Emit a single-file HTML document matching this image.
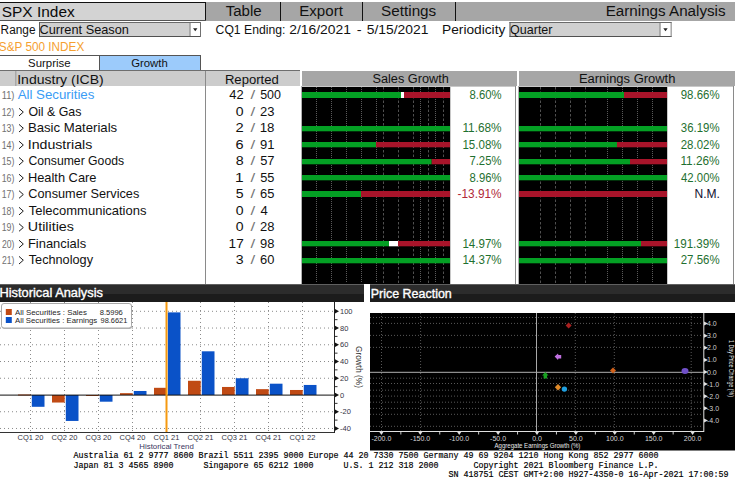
<!DOCTYPE html>
<html><head><meta charset="utf-8"><style>
html,body{margin:0;padding:0;background:#fff;width:735px;height:486px;overflow:hidden}
svg{display:block}
</style></head><body>
<svg width="735" height="486" viewBox="0 0 735 486" style='font-family:"Liberation Sans", sans-serif'>
<rect x="0" y="2" width="206" height="19" fill="#d3d3d3" />
<rect x="0" y="2" width="206" height="1" fill="#111" />
<rect x="205" y="2" width="1" height="19" fill="#111" />
<rect x="0" y="20" width="206" height="1" fill="#555" />
<text x="1.81" y="17" font-size="15" fill="#0a0a0a" textLength="72.89" lengthAdjust="spacingAndGlyphs" >SPX Index</text>
<rect x="206" y="2" width="529" height="19" fill="#a6a6a6" />
<rect x="280" y="2" width="1" height="19" fill="#111" />
<rect x="362" y="2" width="1" height="19" fill="#111" />
<rect x="455" y="2" width="1" height="19" fill="#111" />
<text x="225.66" y="16.3" font-size="15.5" fill="#111" textLength="35.99" lengthAdjust="spacingAndGlyphs" >Table</text>
<text x="299.25" y="16.3" font-size="15.5" fill="#111" textLength="43.66" lengthAdjust="spacingAndGlyphs" >Export</text>
<text x="381.11" y="16.3" font-size="15.5" fill="#111" textLength="55.13" lengthAdjust="spacingAndGlyphs" >Settings</text>
<text x="605.75" y="16.3" font-size="15.5" fill="#111" textLength="119.80" lengthAdjust="spacingAndGlyphs" >Earnings Analysis</text>
<text x="0.62" y="33.5" font-size="12.5" fill="#111" textLength="34.90" lengthAdjust="spacingAndGlyphs" >Range</text>
<rect x="39" y="22" width="162" height="15" fill="#d0d0d0" />
<rect x="39" y="22" width="162" height="1" fill="#6a6a6a" />
<rect x="39" y="22" width="1" height="15" fill="#5a5a5a" />
<rect x="39" y="36" width="162" height="1" fill="#505050" />
<rect x="200" y="22" width="1" height="15" fill="#707070" />
<rect x="189.5" y="23" width="10.5" height="13" fill="#ffffff" />
<rect x="189.5" y="23" width="1" height="13" fill="#6a6a6a" />
<path d="M193.05,28.3 L197.45,28.3 L195.25,31.2 Z" fill="#222"/>
<text x="39.56" y="34.1" font-size="12.8" fill="#111" textLength="89.36" lengthAdjust="spacingAndGlyphs" >Current Season</text>
<text x="215.59" y="33.9" font-size="13" fill="#111" textLength="69.82" lengthAdjust="spacingAndGlyphs" >CQ1 Ending:</text>
<text x="289.31" y="33.9" font-size="13" fill="#111" textLength="61.57" lengthAdjust="spacingAndGlyphs" >2/16/2021</text>
<text x="356.74" y="33.9" font-size="13" fill="#111" textLength="4.89" lengthAdjust="spacingAndGlyphs" >-</text>
<text x="366.74" y="33.9" font-size="13" fill="#111" textLength="61.73" lengthAdjust="spacingAndGlyphs" >5/15/2021</text>
<text x="442.07" y="33.9" font-size="13" fill="#111" textLength="63.27" lengthAdjust="spacingAndGlyphs" >Periodicity</text>
<rect x="509.5" y="22" width="162.0" height="15" fill="#d0d0d0" />
<rect x="509.5" y="22" width="162.0" height="1" fill="#6a6a6a" />
<rect x="509.5" y="22" width="1" height="15" fill="#5a5a5a" />
<rect x="509.5" y="36" width="162.0" height="1" fill="#505050" />
<rect x="670.5" y="22" width="1" height="15" fill="#707070" />
<rect x="659.5" y="23" width="11.0" height="13" fill="#ffffff" />
<rect x="659.5" y="23" width="1" height="13" fill="#6a6a6a" />
<path d="M663.3,28.3 L667.7,28.3 L665.5,31.2 Z" fill="#222"/>
<text x="510.11" y="34.1" font-size="12.8" fill="#111" textLength="42.38" lengthAdjust="spacingAndGlyphs" >Quarter</text>
<text x="-1.13" y="51" font-size="12" fill="#f5a030" textLength="85.37" lengthAdjust="spacingAndGlyphs" >S&amp;P 500 INDEX</text>
<rect x="0" y="55" width="200" height="15" fill="#ffffff" />
<rect x="99" y="55" width="101" height="15" fill="#9ccbfb" />
<rect x="0" y="55" width="201" height="1" fill="#555" />
<rect x="99" y="55" width="1" height="15" fill="#555" />
<rect x="200" y="55" width="1" height="15" fill="#555" />
<rect x="0" y="70" width="300" height="1" fill="#6e6e6e" />
<rect x="299" y="71" width="1" height="15" fill="#e0e0e0" />
<text x="28.09" y="66.5" font-size="10.5" fill="#111" textLength="42.41" lengthAdjust="spacingAndGlyphs" >Surprise</text>
<text x="131.23" y="66.5" font-size="10.5" fill="#111" textLength="36.48" lengthAdjust="spacingAndGlyphs" >Growth</text>
<rect x="0" y="71" width="300" height="15" fill="#cccccc" />
<rect x="15" y="71" width="1.5" height="15" fill="#a8a8a8" />
<rect x="302" y="71" width="215" height="15" fill="#a6a6a6" />
<rect x="519" y="71" width="216" height="15" fill="#a6a6a6" />
<text x="17.20" y="83.5" font-size="12.5" fill="#111" textLength="86.55" lengthAdjust="spacingAndGlyphs" >Industry (ICB)</text>
<text x="224.92" y="83.5" font-size="12.5" fill="#111" textLength="53.92" lengthAdjust="spacingAndGlyphs" >Reported</text>
<text x="372.43" y="82.5" font-size="12.5" fill="#111" textLength="76.37" lengthAdjust="spacingAndGlyphs" >Sales Growth</text>
<text x="578.93" y="82.5" font-size="12.5" fill="#111" textLength="96.48" lengthAdjust="spacingAndGlyphs" >Earnings Growth</text>
<rect x="205" y="71" width="1" height="213" fill="#8a8a8a" />
<rect x="301" y="86" width="1" height="198" fill="#b0b0b0" />
<rect x="302" y="86" width="148" height="198" fill="#000" />
<rect x="302" y="86" width="148" height="1" fill="#c8c8c8" />
<rect x="450" y="86" width="1" height="198" fill="#c8c8c8" />
<rect x="450" y="86" width="66" height="1" fill="#c8c8c8" />
<rect x="515" y="86" width="1" height="198" fill="#8a8a8a" />
<rect x="518" y="86" width="1" height="198" fill="#b0b0b0" />
<rect x="519" y="86" width="148" height="198" fill="#000" />
<rect x="519" y="86" width="148" height="1" fill="#c8c8c8" />
<rect x="667" y="86" width="1" height="198" fill="#c8c8c8" />
<rect x="667" y="86" width="67" height="1" fill="#c8c8c8" />
<rect x="733" y="86" width="1" height="198" fill="#8a8a8a" />
<line x1="316.5" y1="87" x2="316.5" y2="283" stroke="#5a5a5a" stroke-width="1" stroke-dasharray="1,1" />
<line x1="331.5" y1="87" x2="331.5" y2="283" stroke="#5a5a5a" stroke-width="1" stroke-dasharray="1,1" />
<line x1="346.5" y1="87" x2="346.5" y2="283" stroke="#5a5a5a" stroke-width="1" stroke-dasharray="1,1" />
<line x1="361.5" y1="87" x2="361.5" y2="283" stroke="#5a5a5a" stroke-width="1" stroke-dasharray="1,1" />
<line x1="376.5" y1="87" x2="376.5" y2="283" stroke="#5a5a5a" stroke-width="1" stroke-dasharray="1,1" />
<line x1="420.5" y1="87" x2="420.5" y2="283" stroke="#5a5a5a" stroke-width="1" stroke-dasharray="1,1" />
<line x1="435.5" y1="87" x2="435.5" y2="283" stroke="#5a5a5a" stroke-width="1" stroke-dasharray="1,1" />
<line x1="607.5" y1="87" x2="607.5" y2="283" stroke="#5a5a5a" stroke-width="1" stroke-dasharray="1,1" />
<line x1="622.5" y1="87" x2="622.5" y2="283" stroke="#5a5a5a" stroke-width="1" stroke-dasharray="1,1" />
<line x1="637.5" y1="87" x2="637.5" y2="283" stroke="#5a5a5a" stroke-width="1" stroke-dasharray="1,1" />
<line x1="652.5" y1="87" x2="652.5" y2="283" stroke="#5a5a5a" stroke-width="1" stroke-dasharray="1,1" />
<line x1="383.5" y1="87" x2="383.5" y2="283" stroke="#505050" stroke-width="1" stroke-dasharray="2.5,2" />
<line x1="398.5" y1="87" x2="398.5" y2="283" stroke="#505050" stroke-width="1" stroke-dasharray="2.5,2" />
<line x1="413.5" y1="87" x2="413.5" y2="283" stroke="#505050" stroke-width="1" stroke-dasharray="2.5,2" />
<line x1="428.5" y1="87" x2="428.5" y2="283" stroke="#505050" stroke-width="1" stroke-dasharray="2.5,2" />
<line x1="443.5" y1="87" x2="443.5" y2="283" stroke="#505050" stroke-width="1" stroke-dasharray="2.5,2" />
<line x1="540.5" y1="87" x2="540.5" y2="283" stroke="#505050" stroke-width="1" stroke-dasharray="2.5,2" />
<line x1="555.5" y1="87" x2="555.5" y2="283" stroke="#505050" stroke-width="1" stroke-dasharray="2.5,2" />
<line x1="570.5" y1="87" x2="570.5" y2="283" stroke="#505050" stroke-width="1" stroke-dasharray="2.5,2" />
<line x1="585.5" y1="87" x2="585.5" y2="283" stroke="#505050" stroke-width="1" stroke-dasharray="2.5,2" />
<text x="1.70" y="99.1" font-size="11" fill="#707070" textLength="12.77" lengthAdjust="spacingAndGlyphs" >11)</text>
<text x="17.67" y="99.1" font-size="12.8" fill="#3a9cf5" textLength="76.70" lengthAdjust="spacingAndGlyphs" >All Securities</text>
<text x="229.31" y="99.1" font-size="12.5" fill="#111" textLength="14.37" lengthAdjust="spacingAndGlyphs" >42</text>
<text x="250.40" y="99.1" font-size="12.5" fill="#777" textLength="4.71" lengthAdjust="spacingAndGlyphs" >/</text>
<text x="260.20" y="99.1" font-size="12.5" fill="#111" textLength="20.78" lengthAdjust="spacingAndGlyphs" >500</text>
<rect x="302" y="92" width="99" height="6" fill="#04a024" />
<rect x="401" y="92" width="3" height="6" fill="#ffffff" />
<rect x="404" y="92" width="46" height="6" fill="#a8142a" />
<text x="469.52" y="99.1" font-size="12.8" fill="#1f7030" textLength="32.05" lengthAdjust="spacingAndGlyphs" >8.60%</text>
<rect x="519" y="92" width="105" height="6" fill="#04a024" />
<rect x="624" y="92" width="43" height="6" fill="#a8142a" />
<text x="680.76" y="99.1" font-size="12.8" fill="#1f7030" textLength="38.84" lengthAdjust="spacingAndGlyphs" >98.66%</text>
<text x="1.74" y="115.9" font-size="11" fill="#707070" textLength="12.69" lengthAdjust="spacingAndGlyphs" >12)</text>
<path d="M19,108.3 L23.3,112.1 L19,115.9" fill="none" stroke="#111" stroke-width="0.95"/>
<text x="28.41" y="115.9" font-size="12.8" fill="#111" textLength="53.01" lengthAdjust="spacingAndGlyphs" >Oil &amp; Gas</text>
<text x="235.74" y="115.9" font-size="12.5" fill="#111" textLength="7.80" lengthAdjust="spacingAndGlyphs" >0</text>
<text x="250.40" y="115.9" font-size="12.5" fill="#777" textLength="4.71" lengthAdjust="spacingAndGlyphs" >/</text>
<text x="260.05" y="115.9" font-size="12.5" fill="#111" textLength="14.43" lengthAdjust="spacingAndGlyphs" >23</text>
<text x="1.74" y="132" font-size="11" fill="#707070" textLength="12.69" lengthAdjust="spacingAndGlyphs" >13)</text>
<path d="M19,124.4 L23.3,128.2 L19,132.0" fill="none" stroke="#111" stroke-width="0.95"/>
<text x="27.91" y="132" font-size="12.8" fill="#111" textLength="89.25" lengthAdjust="spacingAndGlyphs" >Basic Materials</text>
<text x="235.56" y="132" font-size="12.5" fill="#111" textLength="8.19" lengthAdjust="spacingAndGlyphs" >2</text>
<text x="250.40" y="132" font-size="12.5" fill="#777" textLength="4.71" lengthAdjust="spacingAndGlyphs" >/</text>
<text x="259.70" y="132" font-size="12.5" fill="#111" textLength="14.79" lengthAdjust="spacingAndGlyphs" >18</text>
<rect x="302" y="126" width="148" height="5.3" fill="#04a024" />
<text x="462.41" y="132" font-size="12.8" fill="#1f7030" textLength="39.20" lengthAdjust="spacingAndGlyphs" >11.68%</text>
<rect x="519" y="126" width="148" height="5.3" fill="#04a024" />
<text x="680.87" y="132" font-size="12.8" fill="#1f7030" textLength="38.72" lengthAdjust="spacingAndGlyphs" >36.19%</text>
<text x="1.74" y="148.8" font-size="11" fill="#707070" textLength="12.69" lengthAdjust="spacingAndGlyphs" >14)</text>
<path d="M19,141.2 L23.3,145.0 L19,148.8" fill="none" stroke="#111" stroke-width="0.95"/>
<text x="27.69" y="148.8" font-size="12.8" fill="#111" textLength="64.61" lengthAdjust="spacingAndGlyphs" >Industrials</text>
<text x="235.58" y="148.8" font-size="12.5" fill="#111" textLength="8.06" lengthAdjust="spacingAndGlyphs" >6</text>
<text x="250.40" y="148.8" font-size="12.5" fill="#777" textLength="4.71" lengthAdjust="spacingAndGlyphs" >/</text>
<text x="260.08" y="148.8" font-size="12.5" fill="#111" textLength="14.47" lengthAdjust="spacingAndGlyphs" >91</text>
<rect x="302" y="142" width="74" height="5.3" fill="#04a024" />
<rect x="376" y="142" width="74" height="5.3" fill="#a8142a" />
<text x="462.43" y="148.8" font-size="12.8" fill="#1f7030" textLength="39.16" lengthAdjust="spacingAndGlyphs" >15.08%</text>
<rect x="519" y="142" width="98" height="5.3" fill="#04a024" />
<rect x="617" y="142" width="50" height="5.3" fill="#a8142a" />
<text x="680.73" y="148.8" font-size="12.8" fill="#1f7030" textLength="38.87" lengthAdjust="spacingAndGlyphs" >28.02%</text>
<text x="1.74" y="165" font-size="11" fill="#707070" textLength="12.69" lengthAdjust="spacingAndGlyphs" >15)</text>
<path d="M19,157.4 L23.3,161.2 L19,165.0" fill="none" stroke="#111" stroke-width="0.95"/>
<text x="28.39" y="165" font-size="12.8" fill="#111" textLength="95.73" lengthAdjust="spacingAndGlyphs" >Consumer Goods</text>
<text x="235.69" y="165" font-size="12.5" fill="#111" textLength="7.93" lengthAdjust="spacingAndGlyphs" >8</text>
<text x="250.40" y="165" font-size="12.5" fill="#777" textLength="4.71" lengthAdjust="spacingAndGlyphs" >/</text>
<text x="260.18" y="165" font-size="12.5" fill="#111" textLength="14.40" lengthAdjust="spacingAndGlyphs" >57</text>
<rect x="302" y="159" width="129.7" height="5.3" fill="#04a024" />
<rect x="431.7" y="159" width="18.30000000000001" height="5.3" fill="#a8142a" />
<text x="469.43" y="165" font-size="12.8" fill="#1f7030" textLength="32.14" lengthAdjust="spacingAndGlyphs" >7.25%</text>
<rect x="519" y="159" width="111" height="5.3" fill="#04a024" />
<rect x="630" y="159" width="37" height="5.3" fill="#a8142a" />
<text x="680.41" y="165" font-size="12.8" fill="#1f7030" textLength="39.20" lengthAdjust="spacingAndGlyphs" >11.26%</text>
<text x="1.74" y="181.8" font-size="11" fill="#707070" textLength="12.69" lengthAdjust="spacingAndGlyphs" >16)</text>
<path d="M19,174.2 L23.3,178.0 L19,181.8" fill="none" stroke="#111" stroke-width="0.95"/>
<text x="27.94" y="181.8" font-size="12.8" fill="#111" textLength="68.52" lengthAdjust="spacingAndGlyphs" >Health Care</text>
<text x="235.14" y="181.8" font-size="12.5" fill="#111" textLength="8.62" lengthAdjust="spacingAndGlyphs" >1</text>
<text x="250.40" y="181.8" font-size="12.5" fill="#777" textLength="4.71" lengthAdjust="spacingAndGlyphs" >/</text>
<text x="260.19" y="181.8" font-size="12.5" fill="#111" textLength="14.26" lengthAdjust="spacingAndGlyphs" >55</text>
<rect x="302" y="175" width="148" height="5.3" fill="#04a024" />
<text x="469.52" y="181.8" font-size="12.8" fill="#1f7030" textLength="32.05" lengthAdjust="spacingAndGlyphs" >8.96%</text>
<rect x="519" y="175" width="148" height="5.3" fill="#04a024" />
<text x="681.04" y="181.8" font-size="12.8" fill="#1f7030" textLength="38.54" lengthAdjust="spacingAndGlyphs" >42.00%</text>
<text x="1.74" y="198.3" font-size="11" fill="#707070" textLength="12.69" lengthAdjust="spacingAndGlyphs" >17)</text>
<path d="M19,190.7 L23.3,194.5 L19,198.3" fill="none" stroke="#111" stroke-width="0.95"/>
<text x="28.36" y="198.3" font-size="12.8" fill="#111" textLength="110.88" lengthAdjust="spacingAndGlyphs" >Consumer Services</text>
<text x="235.74" y="198.3" font-size="12.5" fill="#111" textLength="7.84" lengthAdjust="spacingAndGlyphs" >5</text>
<text x="250.40" y="198.3" font-size="12.5" fill="#777" textLength="4.71" lengthAdjust="spacingAndGlyphs" >/</text>
<text x="260.05" y="198.3" font-size="12.5" fill="#111" textLength="14.40" lengthAdjust="spacingAndGlyphs" >65</text>
<rect x="302" y="191" width="59" height="6" fill="#04a024" />
<rect x="361" y="191" width="89" height="6" fill="#a8142a" />
<text x="457.57" y="198.3" font-size="12.8" fill="#b02838" textLength="44.04" lengthAdjust="spacingAndGlyphs" >-13.91%</text>
<rect x="519" y="191" width="0" height="6" fill="#04a024" />
<rect x="519" y="191" width="148" height="6" fill="#a8142a" />
<text x="694.51" y="198.3" font-size="12.8" fill="#101030" textLength="25.39" lengthAdjust="spacingAndGlyphs" >N.M.</text>
<text x="1.74" y="214.9" font-size="11" fill="#707070" textLength="12.69" lengthAdjust="spacingAndGlyphs" >18)</text>
<path d="M19,207.3 L23.3,211.1 L19,214.9" fill="none" stroke="#111" stroke-width="0.95"/>
<text x="28.71" y="214.9" font-size="12.8" fill="#111" textLength="117.75" lengthAdjust="spacingAndGlyphs" >Telecommunications</text>
<text x="235.74" y="214.9" font-size="12.5" fill="#111" textLength="7.80" lengthAdjust="spacingAndGlyphs" >0</text>
<text x="250.40" y="214.9" font-size="12.5" fill="#777" textLength="4.71" lengthAdjust="spacingAndGlyphs" >/</text>
<text x="260.41" y="214.9" font-size="12.5" fill="#111" textLength="7.27" lengthAdjust="spacingAndGlyphs" >4</text>
<text x="1.74" y="231.3" font-size="11" fill="#707070" textLength="12.69" lengthAdjust="spacingAndGlyphs" >19)</text>
<path d="M19,223.7 L23.3,227.5 L19,231.3" fill="none" stroke="#111" stroke-width="0.95"/>
<text x="27.89" y="231.3" font-size="12.8" fill="#111" textLength="46.11" lengthAdjust="spacingAndGlyphs" >Utilities</text>
<text x="235.74" y="231.3" font-size="12.5" fill="#111" textLength="7.80" lengthAdjust="spacingAndGlyphs" >0</text>
<text x="250.40" y="231.3" font-size="12.5" fill="#777" textLength="4.71" lengthAdjust="spacingAndGlyphs" >/</text>
<text x="260.05" y="231.3" font-size="12.5" fill="#111" textLength="14.43" lengthAdjust="spacingAndGlyphs" >28</text>
<text x="1.97" y="247.8" font-size="11" fill="#707070" textLength="12.45" lengthAdjust="spacingAndGlyphs" >20)</text>
<path d="M19,240.2 L23.3,244.0 L19,247.8" fill="none" stroke="#111" stroke-width="0.95"/>
<text x="27.93" y="247.8" font-size="12.8" fill="#111" textLength="58.21" lengthAdjust="spacingAndGlyphs" >Financials</text>
<text x="228.58" y="247.8" font-size="12.5" fill="#111" textLength="15.13" lengthAdjust="spacingAndGlyphs" >17</text>
<text x="250.40" y="247.8" font-size="12.5" fill="#777" textLength="4.71" lengthAdjust="spacingAndGlyphs" >/</text>
<text x="260.09" y="247.8" font-size="12.5" fill="#111" textLength="14.40" lengthAdjust="spacingAndGlyphs" >98</text>
<rect x="302" y="241" width="87" height="5.3" fill="#04a024" />
<rect x="389" y="241" width="9" height="5.3" fill="#ffffff" />
<rect x="398" y="241" width="52" height="5.3" fill="#a8142a" />
<text x="462.43" y="247.8" font-size="12.8" fill="#1f7030" textLength="39.16" lengthAdjust="spacingAndGlyphs" >14.97%</text>
<rect x="519" y="241" width="122" height="5.3" fill="#04a024" />
<rect x="641" y="241" width="26" height="5.3" fill="#a8142a" />
<text x="673.73" y="247.8" font-size="12.8" fill="#1f7030" textLength="45.88" lengthAdjust="spacingAndGlyphs" >191.39%</text>
<text x="1.97" y="264" font-size="11" fill="#707070" textLength="12.45" lengthAdjust="spacingAndGlyphs" >21)</text>
<path d="M19,256.4 L23.3,260.2 L19,264.0" fill="none" stroke="#111" stroke-width="0.95"/>
<text x="28.71" y="264" font-size="12.8" fill="#111" textLength="64.31" lengthAdjust="spacingAndGlyphs" >Technology</text>
<text x="235.77" y="264" font-size="12.5" fill="#111" textLength="7.84" lengthAdjust="spacingAndGlyphs" >3</text>
<text x="250.40" y="264" font-size="12.5" fill="#777" textLength="4.71" lengthAdjust="spacingAndGlyphs" >/</text>
<text x="260.05" y="264" font-size="12.5" fill="#111" textLength="14.36" lengthAdjust="spacingAndGlyphs" >60</text>
<rect x="302" y="258" width="148" height="5.3" fill="#04a024" />
<text x="462.43" y="264" font-size="12.8" fill="#1f7030" textLength="39.16" lengthAdjust="spacingAndGlyphs" >14.37%</text>
<rect x="519" y="258" width="148" height="5.3" fill="#04a024" />
<text x="680.73" y="264" font-size="12.8" fill="#1f7030" textLength="38.87" lengthAdjust="spacingAndGlyphs" >27.56%</text>
<rect x="0" y="284" width="364" height="18" fill="#1c1c1c" />
<rect x="0" y="284" width="364" height="10" fill="#2c2c2c" />
<rect x="0" y="284" width="364" height="1" fill="#606060" />
<text x="-0.56" y="297.4" font-size="12.5" fill="#ffffff" textLength="103.52" lengthAdjust="spacingAndGlyphs" stroke="#fff" stroke-width="0.35">Historical Analysis</text>
<rect x="370" y="284" width="365" height="18" fill="#1c1c1c" />
<rect x="370" y="284" width="365" height="10" fill="#2c2c2c" />
<rect x="370" y="284" width="365" height="1" fill="#606060" />
<text x="370.77" y="297.8" font-size="12.5" fill="#ffffff" textLength="81.01" lengthAdjust="spacingAndGlyphs" stroke="#fff" stroke-width="0.35">Price Reaction</text>
<line x1="30.5" y1="302" x2="30.5" y2="432" stroke="#8a8a8a" stroke-width="1" stroke-dasharray="1,3" />
<line x1="64.5" y1="302" x2="64.5" y2="432" stroke="#8a8a8a" stroke-width="1" stroke-dasharray="1,3" />
<line x1="98.5" y1="302" x2="98.5" y2="432" stroke="#8a8a8a" stroke-width="1" stroke-dasharray="1,3" />
<line x1="132.5" y1="302" x2="132.5" y2="432" stroke="#8a8a8a" stroke-width="1" stroke-dasharray="1,3" />
<line x1="166.5" y1="302" x2="166.5" y2="432" stroke="#8a8a8a" stroke-width="1" stroke-dasharray="1,3" />
<line x1="200.5" y1="302" x2="200.5" y2="432" stroke="#8a8a8a" stroke-width="1" stroke-dasharray="1,3" />
<line x1="234.5" y1="302" x2="234.5" y2="432" stroke="#8a8a8a" stroke-width="1" stroke-dasharray="1,3" />
<line x1="268.5" y1="302" x2="268.5" y2="432" stroke="#8a8a8a" stroke-width="1" stroke-dasharray="1,3" />
<line x1="302.5" y1="302" x2="302.5" y2="432" stroke="#8a8a8a" stroke-width="1" stroke-dasharray="1,3" />
<line x1="0" y1="311.3" x2="333" y2="311.3" stroke="#8a8a8a" stroke-width="1" stroke-dasharray="1,3" />
<line x1="0" y1="328.04" x2="333" y2="328.04" stroke="#8a8a8a" stroke-width="1" stroke-dasharray="1,3" />
<line x1="0" y1="344.78" x2="333" y2="344.78" stroke="#8a8a8a" stroke-width="1" stroke-dasharray="1,3" />
<line x1="0" y1="361.52" x2="333" y2="361.52" stroke="#8a8a8a" stroke-width="1" stroke-dasharray="1,3" />
<line x1="0" y1="378.26" x2="333" y2="378.26" stroke="#8a8a8a" stroke-width="1" stroke-dasharray="1,3" />
<line x1="0" y1="411.74" x2="333" y2="411.74" stroke="#8a8a8a" stroke-width="1" stroke-dasharray="1,3" />
<line x1="0" y1="428.48" x2="333" y2="428.48" stroke="#8a8a8a" stroke-width="1" stroke-dasharray="1,3" />
<rect x="18.0" y="394.4978" width="12.7" height="1" fill="#c04a14" />
<rect x="31.8" y="395.0" width="12.7" height="11.801699999999999" fill="#0a52c8" />
<rect x="52.0" y="395.0" width="12.7" height="7.5329999999999995" fill="#c04a14" />
<rect x="65.8" y="395.0" width="12.7" height="25.947" fill="#0a52c8" />
<rect x="86.0" y="395.0" width="12.7" height="1" fill="#c04a14" />
<rect x="99.8" y="395.0" width="12.7" height="6.696" fill="#0a52c8" />
<rect x="120.0" y="393.1586" width="12.7" height="1.8414000000000001" fill="#c04a14" />
<rect x="133.8" y="390.9824" width="12.7" height="4.0176" fill="#0a52c8" />
<rect x="154.0" y="387.8018" width="12.7" height="7.198199999999999" fill="#c04a14" />
<rect x="167.8" y="312.3881" width="12.7" height="82.6119" fill="#0a52c8" />
<rect x="188.0" y="380.771" width="12.7" height="14.229" fill="#c04a14" />
<rect x="201.8" y="351.3086" width="12.7" height="43.6914" fill="#0a52c8" />
<rect x="222.0" y="386.9648" width="12.7" height="8.0352" fill="#c04a14" />
<rect x="235.8" y="378.26" width="12.7" height="16.74" fill="#0a52c8" />
<rect x="256.0" y="389.141" width="12.7" height="5.859" fill="#c04a14" />
<rect x="269.8" y="383.7005" width="12.7" height="11.2995" fill="#0a52c8" />
<rect x="290.0" y="389.978" width="12.7" height="5.022" fill="#c04a14" />
<rect x="303.8" y="384.956" width="12.7" height="10.044" fill="#0a52c8" />
<rect x="0" y="394.6" width="335" height="1" fill="#111" />
<rect x="0" y="432" width="335" height="1" fill="#333" />
<rect x="334" y="302" width="1" height="131" fill="#222" />
<rect x="165.5" y="302" width="2" height="130" fill="#f59a10" />
<path d="M335,309.1 L339,311.3 L335,313.5 Z" fill="#111"/>
<text x="340" y="313.9" font-size="7.5" fill="#334" font-family='"Liberation Sans", sans-serif'>100</text>
<path d="M335,325.84000000000003 L339,328.04 L335,330.24 Z" fill="#111"/>
<text x="340" y="330.6" font-size="7.5" fill="#334" font-family='"Liberation Sans", sans-serif'>80</text>
<path d="M335,342.58 L339,344.78 L335,346.97999999999996 Z" fill="#111"/>
<text x="340" y="347.4" font-size="7.5" fill="#334" font-family='"Liberation Sans", sans-serif'>60</text>
<path d="M335,359.32 L339,361.52 L335,363.71999999999997 Z" fill="#111"/>
<text x="340" y="364.1" font-size="7.5" fill="#334" font-family='"Liberation Sans", sans-serif'>40</text>
<path d="M335,376.06 L339,378.26 L335,380.46 Z" fill="#111"/>
<text x="340" y="380.9" font-size="7.5" fill="#334" font-family='"Liberation Sans", sans-serif'>20</text>
<path d="M335,392.8 L339,395.0 L335,397.2 Z" fill="#111"/>
<text x="340" y="397.6" font-size="7.5" fill="#334" font-family='"Liberation Sans", sans-serif'>0</text>
<path d="M335,409.54 L339,411.74 L335,413.94 Z" fill="#111"/>
<text x="340" y="414.3" font-size="7.5" fill="#334" font-family='"Liberation Sans", sans-serif'>-20</text>
<path d="M335,426.28000000000003 L339,428.48 L335,430.68 Z" fill="#111"/>
<text x="340" y="431.1" font-size="7.5" fill="#334" font-family='"Liberation Sans", sans-serif'>-40</text>
<line x1="335" y1="319.67" x2="337.5" y2="319.67" stroke="#333" stroke-width="1" />
<line x1="335" y1="336.41" x2="337.5" y2="336.41" stroke="#333" stroke-width="1" />
<line x1="335" y1="353.15" x2="337.5" y2="353.15" stroke="#333" stroke-width="1" />
<line x1="335" y1="369.89" x2="337.5" y2="369.89" stroke="#333" stroke-width="1" />
<line x1="335" y1="386.63" x2="337.5" y2="386.63" stroke="#333" stroke-width="1" />
<line x1="335" y1="403.37" x2="337.5" y2="403.37" stroke="#333" stroke-width="1" />
<line x1="335" y1="420.11" x2="337.5" y2="420.11" stroke="#333" stroke-width="1" />
<text transform="translate(356,346) rotate(90)" font-size="9" fill="#333" font-family='"Liberation Sans", sans-serif' textLength="42" lengthAdjust="spacingAndGlyphs">Growth (%)</text>
<text x="30.5" y="439.8" font-size="7.5" fill="#334" text-anchor="middle" font-family='"Liberation Sans", sans-serif'>CQ1 20</text>
<text x="64.5" y="439.8" font-size="7.5" fill="#334" text-anchor="middle" font-family='"Liberation Sans", sans-serif'>CQ2 20</text>
<text x="98.5" y="439.8" font-size="7.5" fill="#334" text-anchor="middle" font-family='"Liberation Sans", sans-serif'>CQ3 20</text>
<text x="132.5" y="439.8" font-size="7.5" fill="#334" text-anchor="middle" font-family='"Liberation Sans", sans-serif'>CQ4 20</text>
<text x="166.5" y="439.8" font-size="7.5" fill="#334" text-anchor="middle" font-family='"Liberation Sans", sans-serif'>CQ1 21</text>
<text x="200.5" y="439.8" font-size="7.5" fill="#334" text-anchor="middle" font-family='"Liberation Sans", sans-serif'>CQ2 21</text>
<text x="234.5" y="439.8" font-size="7.5" fill="#334" text-anchor="middle" font-family='"Liberation Sans", sans-serif'>CQ3 21</text>
<text x="268.5" y="439.8" font-size="7.5" fill="#334" text-anchor="middle" font-family='"Liberation Sans", sans-serif'>CQ4 21</text>
<text x="302.5" y="439.8" font-size="7.5" fill="#334" text-anchor="middle" font-family='"Liberation Sans", sans-serif'>CQ1 22</text>
<text x="139.35" y="448.5" font-size="8" fill="#3a3560" textLength="54.45" lengthAdjust="spacingAndGlyphs" >Historical Trend</text>
<rect x="2" y="304.5" width="130" height="24.5" rx="2.5" fill="#b8b8b8"/>
<rect x="1.5" y="303.5" width="130" height="24.5" rx="2.5" fill="#ffffff" stroke="#a8a8a8" stroke-width="1"/>
<rect x="5.8" y="309" width="6" height="6" fill="#c04a14" />
<rect x="5.8" y="317" width="6" height="6" fill="#0a52c8" />
<text x="14.98" y="314.8" font-size="8" fill="#262626" textLength="72.00" lengthAdjust="spacingAndGlyphs" >All Securities : Sales</text>
<text x="99.68" y="314.8" font-size="8" fill="#262626" textLength="23.15" lengthAdjust="spacingAndGlyphs" >8.5996</text>
<text x="14.98" y="322.8" font-size="8" fill="#262626" textLength="82.30" lengthAdjust="spacingAndGlyphs" >All Securities : Earnings</text>
<text x="100.55" y="322.8" font-size="8" fill="#262626" textLength="26.82" lengthAdjust="spacingAndGlyphs" >98.6621</text>
<rect x="370" y="313" width="365" height="137.5" fill="#000" />
<line x1="381.5" y1="313" x2="381.5" y2="431" stroke="#585858" stroke-width="1" stroke-dasharray="1,2" />
<line x1="420.6" y1="313" x2="420.6" y2="431" stroke="#585858" stroke-width="1" stroke-dasharray="1,2" />
<line x1="575.3" y1="313" x2="575.3" y2="431" stroke="#585858" stroke-width="1" stroke-dasharray="1,2" />
<line x1="614.3" y1="313" x2="614.3" y2="431" stroke="#585858" stroke-width="1" stroke-dasharray="1,2" />
<line x1="691.2" y1="313" x2="691.2" y2="431" stroke="#585858" stroke-width="1" stroke-dasharray="1,2" />
<line x1="370" y1="317.5" x2="703" y2="317.5" stroke="#585858" stroke-width="1" stroke-dasharray="1,2" />
<line x1="370" y1="323.4" x2="703" y2="323.4" stroke="#585858" stroke-width="1" stroke-dasharray="1,2" />
<line x1="370" y1="335.4" x2="703" y2="335.4" stroke="#585858" stroke-width="1" stroke-dasharray="1,2" />
<line x1="370" y1="347.4" x2="703" y2="347.4" stroke="#585858" stroke-width="1" stroke-dasharray="1,2" />
<line x1="370" y1="378.2" x2="703" y2="378.2" stroke="#585858" stroke-width="1" stroke-dasharray="1,2" />
<line x1="370" y1="383.5" x2="703" y2="383.5" stroke="#585858" stroke-width="1" stroke-dasharray="1,2" />
<line x1="370" y1="390.2" x2="703" y2="390.2" stroke="#585858" stroke-width="1" stroke-dasharray="1,2" />
<line x1="370" y1="396.1" x2="703" y2="396.1" stroke="#585858" stroke-width="1" stroke-dasharray="1,2" />
<line x1="370" y1="402.2" x2="703" y2="402.2" stroke="#585858" stroke-width="1" stroke-dasharray="1,2" />
<line x1="370" y1="408.4" x2="703" y2="408.4" stroke="#585858" stroke-width="1" stroke-dasharray="1,2" />
<line x1="370" y1="414.3" x2="703" y2="414.3" stroke="#585858" stroke-width="1" stroke-dasharray="1,2" />
<line x1="370" y1="426.3" x2="703" y2="426.3" stroke="#585858" stroke-width="1" stroke-dasharray="1,2" />
<rect x="370" y="371.8" width="334" height="1" fill="#b0b0b0" />
<line x1="536.5" y1="313" x2="536.5" y2="431" stroke="#a8a8a8" stroke-width="1" />
<rect x="370" y="431" width="334" height="1" fill="#e0e0e0" />
<rect x="703.3" y="313" width="1" height="119" fill="#e0e0e0" />
<path d="M379.4,432 L383.4,432 L381.4,435 Z" fill="#e0e0e0"/>
<text x="381.4" y="441" font-size="7" fill="#d8d8d8" text-anchor="middle" font-family='"Liberation Sans", sans-serif'>-200.0</text>
<path d="M418.3,432 L422.3,432 L420.3,435 Z" fill="#e0e0e0"/>
<text x="420.3" y="441" font-size="7" fill="#d8d8d8" text-anchor="middle" font-family='"Liberation Sans", sans-serif'>-150.0</text>
<path d="M457.2,432 L461.2,432 L459.2,435 Z" fill="#e0e0e0"/>
<text x="459.2" y="441" font-size="7" fill="#d8d8d8" text-anchor="middle" font-family='"Liberation Sans", sans-serif'>-100.0</text>
<path d="M496.1,432 L500.1,432 L498.1,435 Z" fill="#e0e0e0"/>
<text x="498.1" y="441" font-size="7" fill="#d8d8d8" text-anchor="middle" font-family='"Liberation Sans", sans-serif'>-50.0</text>
<path d="M535.0,432 L539.0,432 L537.0,435 Z" fill="#e0e0e0"/>
<text x="537.0" y="441" font-size="7" fill="#d8d8d8" text-anchor="middle" font-family='"Liberation Sans", sans-serif'>0.0</text>
<path d="M573.9,432 L577.9,432 L575.9,435 Z" fill="#e0e0e0"/>
<text x="575.9" y="441" font-size="7" fill="#d8d8d8" text-anchor="middle" font-family='"Liberation Sans", sans-serif'>50.0</text>
<path d="M612.8,432 L616.8,432 L614.8,435 Z" fill="#e0e0e0"/>
<text x="614.8" y="441" font-size="7" fill="#d8d8d8" text-anchor="middle" font-family='"Liberation Sans", sans-serif'>100.0</text>
<path d="M651.7,432 L655.7,432 L653.7,435 Z" fill="#e0e0e0"/>
<text x="653.7" y="441" font-size="7" fill="#d8d8d8" text-anchor="middle" font-family='"Liberation Sans", sans-serif'>150.0</text>
<path d="M690.6,432 L694.6,432 L692.6,435 Z" fill="#e0e0e0"/>
<text x="692.6" y="441" font-size="7" fill="#d8d8d8" text-anchor="middle" font-family='"Liberation Sans", sans-serif'>200.0</text>
<line x1="400.85" y1="432" x2="400.85" y2="434.5" stroke="#ccc" stroke-width="1" />
<line x1="439.75" y1="432" x2="439.75" y2="434.5" stroke="#ccc" stroke-width="1" />
<line x1="478.65" y1="432" x2="478.65" y2="434.5" stroke="#ccc" stroke-width="1" />
<line x1="517.55" y1="432" x2="517.55" y2="434.5" stroke="#ccc" stroke-width="1" />
<line x1="556.45" y1="432" x2="556.45" y2="434.5" stroke="#ccc" stroke-width="1" />
<line x1="595.35" y1="432" x2="595.35" y2="434.5" stroke="#ccc" stroke-width="1" />
<line x1="634.25" y1="432" x2="634.25" y2="434.5" stroke="#ccc" stroke-width="1" />
<line x1="673.15" y1="432" x2="673.15" y2="434.5" stroke="#ccc" stroke-width="1" />
<path d="M704,321.6 L708,323.6 L704,325.6 Z" fill="#e0e0e0"/>
<text x="707" y="326.1" font-size="7" fill="#d0d0d0" font-family='"Liberation Sans", sans-serif'>4.0</text>
<path d="M704,333.7 L708,335.7 L704,337.7 Z" fill="#e0e0e0"/>
<text x="707" y="338.2" font-size="7" fill="#d0d0d0" font-family='"Liberation Sans", sans-serif'>3.0</text>
<path d="M704,345.8 L708,347.8 L704,349.8 Z" fill="#e0e0e0"/>
<text x="707" y="350.3" font-size="7" fill="#d0d0d0" font-family='"Liberation Sans", sans-serif'>2.0</text>
<path d="M704,357.9 L708,359.9 L704,361.9 Z" fill="#e0e0e0"/>
<text x="707" y="362.4" font-size="7" fill="#d0d0d0" font-family='"Liberation Sans", sans-serif'>1.0</text>
<path d="M704,370.0 L708,372.0 L704,374.0 Z" fill="#e0e0e0"/>
<text x="707" y="374.5" font-size="7" fill="#d0d0d0" font-family='"Liberation Sans", sans-serif'>0.0</text>
<path d="M704,382.1 L708,384.1 L704,386.1 Z" fill="#e0e0e0"/>
<text x="707" y="386.6" font-size="7" fill="#d0d0d0" font-family='"Liberation Sans", sans-serif'>-1.0</text>
<path d="M704,394.2 L708,396.2 L704,398.2 Z" fill="#e0e0e0"/>
<text x="707" y="398.7" font-size="7" fill="#d0d0d0" font-family='"Liberation Sans", sans-serif'>-2.0</text>
<path d="M704,406.3 L708,408.3 L704,410.3 Z" fill="#e0e0e0"/>
<text x="707" y="410.8" font-size="7" fill="#d0d0d0" font-family='"Liberation Sans", sans-serif'>-3.0</text>
<path d="M704,418.4 L708,420.4 L704,422.4 Z" fill="#e0e0e0"/>
<text x="707" y="422.9" font-size="7" fill="#d0d0d0" font-family='"Liberation Sans", sans-serif'>-4.0</text>
<text transform="translate(729.2,340) rotate(90)" font-size="7.2" fill="#e0e0e0" font-family='"Liberation Sans", sans-serif' textLength="57" lengthAdjust="spacingAndGlyphs">1 Day Price Change (%)</text>
<text x="494.48" y="447.8" font-size="7" fill="#e8e8e8" textLength="85.89" lengthAdjust="spacingAndGlyphs" >Aggregate Earnings Growth (%)</text>
<path d="M568.6,322.6 L571.6,325.6 L568.6,328.6 L565.6,325.6 Z" fill="#a82020"/>
<path d="M554.6,356.6 L558,353.4 L558.4,355 L561.2,355 L561.2,358.4 L558.4,358.4 L558,360 Z" fill="#c070e0"/>
<path d="M545.3,372 L548.5,375.5 L547,375.5 L547,378.5 L543.6,378.5 L543.6,375.5 L542.1,375.5 Z" fill="#18a020"/>
<path d="M613,367.5 L616,370.5 L613,373.5 L610,370.5 Z" fill="#d0601a"/>
<ellipse cx="685" cy="371" rx="3.5" ry="3" fill="#7050c8"/>
<path d="M558,384.0 L561.2,387.2 L558,390.4 L554.8,387.2 Z" fill="#e08a28"/>
<circle cx="564.4" cy="389.1" r="2.7" fill="#20a0e0"/>
<text x="73.5" y="458" font-size="8.8" fill="#000" stroke="#000" stroke-width="0.18" style='font-family:"Liberation Mono", monospace' xml:space="preserve" textLength="585.0" lengthAdjust="spacingAndGlyphs">Australia 61 2 9777 8600 Brazil 5511 2395 9000 Europe 44 20 7330 7500 Germany 49 69 9204 1210 Hong Kong 852 2977 6000</text>
<text x="73.5" y="467.5" font-size="8.8" fill="#000" stroke="#000" stroke-width="0.18" style='font-family:"Liberation Mono", monospace' xml:space="preserve" textLength="585.0" lengthAdjust="spacingAndGlyphs">Japan 81 3 4565 8900      Singapore 65 6212 1000      U.S. 1 212 318 2000       Copyright 2021 Bloomberg Finance L.P.</text>
<text x="448.5" y="477" font-size="8.8" fill="#000" stroke="#000" stroke-width="0.18" style='font-family:"Liberation Mono", monospace' xml:space="preserve" textLength="280.0" lengthAdjust="spacingAndGlyphs">SN 418751 CEST GMT+2:00 H927-4350-0 16-Apr-2021 17:00:59</text>
</svg>
</body></html>
